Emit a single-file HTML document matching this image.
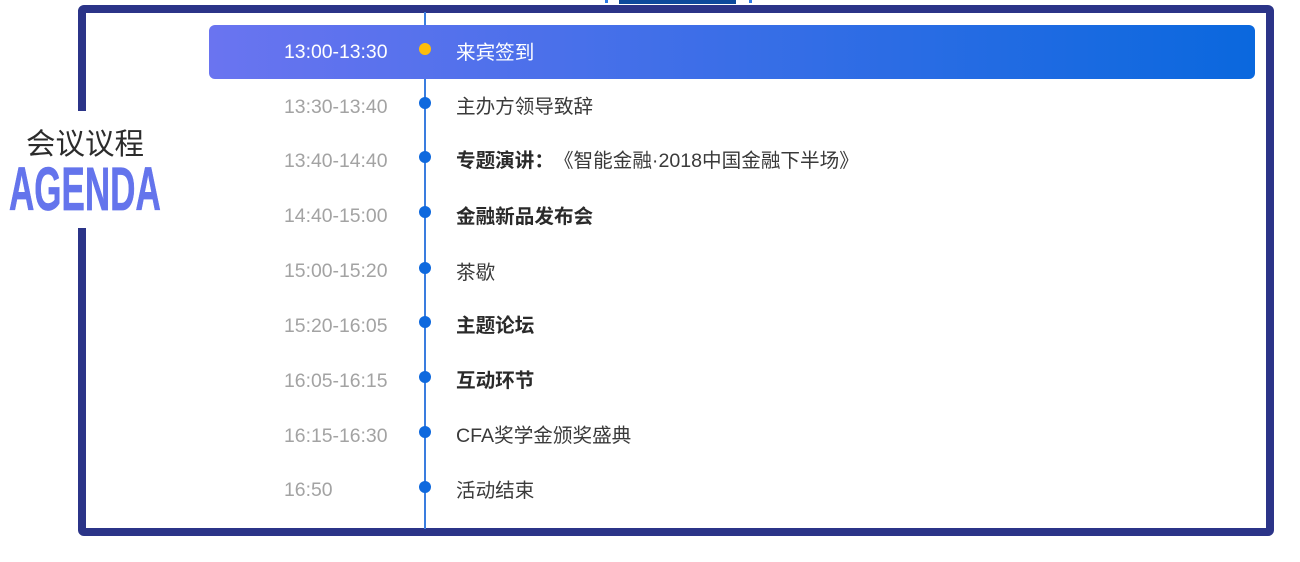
<!DOCTYPE html>
<html><head><meta charset="utf-8"><style>
html,body{margin:0;padding:0;background:#fff;}
body{width:1300px;height:562px;position:relative;overflow:hidden;font-family:"Liberation Sans","Noto Sans CJK SC",sans-serif;text-spacing-trim:space-all;}
div{position:absolute;box-sizing:border-box;}
.frame{left:78px;top:5px;width:1196px;height:531px;border:8px solid #2b3488;border-radius:6px;}
.gap{left:76px;top:111px;width:12px;height:117px;background:#fff;}
.line{left:424px;top:12px;width:2px;height:517px;background:#3a7ddf;}
.bar{left:209px;top:24.5px;width:1046px;height:54px;border-radius:6px;background:linear-gradient(90deg,#6a74f0,#0a68de);}
.t{left:284px;font-size:19.4px;line-height:28px;height:28px;color:#a3a3a3;white-space:nowrap;}
.c{left:456px;font-size:19.6px;line-height:28px;height:28px;color:#3a3a3a;white-space:nowrap;}
.d{left:419px;width:12px;height:12px;border-radius:50%;background:#0f69de;}
b{font-weight:700;color:#2a2a2a;}
</style></head><body>
<div style="left:605px;top:0;width:3px;height:3px;background:#2f7ae5"></div>
<div style="left:619px;top:0;width:117px;height:4px;background:#0d4a9c"></div>
<div style="left:749px;top:0;width:3px;height:3px;background:#2f7ae5"></div>
<div class="frame"></div>
<div class="gap"></div>
<div class="line"></div>
<div class="bar"></div>
<div style="left:26px;top:127px;font-size:29.5px;line-height:36px;color:#2c2c2c;white-space:nowrap;">会议议程</div>
<div style="left:8.5px;top:154px;font-size:61px;line-height:70px;font-weight:700;color:#6474ec;white-space:nowrap;transform-origin:0 0;transform:scaleX(.574);-webkit-text-stroke:.7px #6474ec;">AGENDA</div>

<div class="t" style="top:38px;color:#fff">13:00-13:30</div><div class="d" style="top:43px;background:#fdbd0a"></div><div class="c" style="top:39px;color:#fff">来宾签到</div>
<div class="t" style="top:93px">13:30-13:40</div><div class="d" style="top:97px"></div><div class="c" style="top:93px">主办方领导致辞</div>
<div class="t" style="top:147px">13:40-14:40</div><div class="d" style="top:151px"></div><div class="c" style="top:147px"><b>专题演讲：</b>《智能金融·2018中国金融下半场》</div>
<div class="t" style="top:202px">14:40-15:00</div><div class="d" style="top:206px"></div><div class="c" style="top:203px"><b>金融新品发布会</b></div>
<div class="t" style="top:257px">15:00-15:20</div><div class="d" style="top:262px"></div><div class="c" style="top:259px">茶歇</div>
<div class="t" style="top:312px">15:20-16:05</div><div class="d" style="top:316px"></div><div class="c" style="top:312px"><b>主题论坛</b></div>
<div class="t" style="top:367px">16:05-16:15</div><div class="d" style="top:371px"></div><div class="c" style="top:367px"><b>互动环节</b></div>
<div class="t" style="top:422px">16:15-16:30</div><div class="d" style="top:426px"></div><div class="c" style="top:422px">CFA奖学金颁奖盛典</div>
<div class="t" style="top:476px">16:50</div><div class="d" style="top:481px"></div><div class="c" style="top:477px">活动结束</div>
</body></html>
